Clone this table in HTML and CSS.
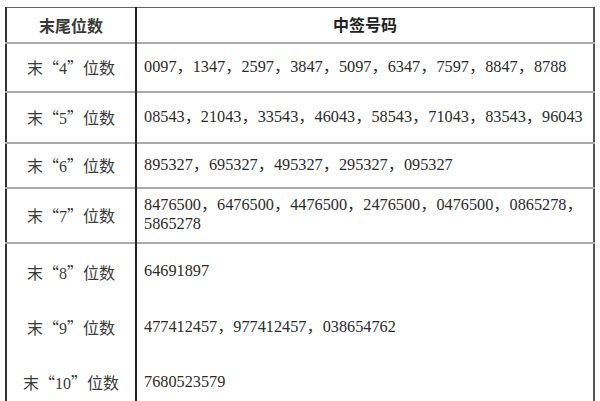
FILE: index.html
```html
<!DOCTYPE html>
<html lang="zh">
<head>
<meta charset="utf-8">
<link rel="stylesheet" href="styles.css">
</head>
<body>
<div class="sheet">
  <table class="lottery">
    <tr class="head">
      <th class="label">末尾位数</th>
      <th class="nums">中签号码</th>
    </tr>
    <tr class="r4 lined">
      <td class="label">末“<span class="d">4</span>”位数</td>
      <td class="nums">0097，1347，2597，3847，5097，6347，7597，8847，8788</td>
    </tr>
    <tr class="r5 lined">
      <td class="label">末“<span class="d">5</span>”位数</td>
      <td class="nums">08543，21043，33543，46043，58543，71043，83543，96043</td>
    </tr>
    <tr class="r6 lined">
      <td class="label">末“<span class="d">6</span>”位数</td>
      <td class="nums">895327，695327，495327，295327，095327</td>
    </tr>
    <tr class="r7 lined">
      <td class="label">末“<span class="d">7</span>”位数</td>
      <td class="nums">8476500，6476500，4476500，2476500，0476500，0865278，<br>5865278</td>
    </tr>
    <tr class="r8">
      <td class="label">末“<span class="d">8</span>”位数</td>
      <td class="nums">64691897</td>
    </tr>
    <tr class="r9">
      <td class="label">末“<span class="d">9</span>”位数</td>
      <td class="nums">477412457，977412457，038654762</td>
    </tr>
    <tr class="r10">
      <td class="label">末“<span class="d">10</span>”位数</td>
      <td class="nums">7680523579</td>
    </tr>
  </table>
</div>
</body>
</html>
```
FILE: styles.css
```css
html, body {
  margin: 0;
  padding: 0;
  background: #fff;
  overflow: hidden;
  height: 401px;
}
.sheet {
  padding: 7px 0 0 5px;
}
.lottery {
  border-collapse: collapse;
  table-layout: fixed;
  width: 590px;
  font-family: "Liberation Serif", "Noto Sans CJK SC", serif;
  font-size: 16px;
  color: #2b2b2b;
  border-top: 1px solid #666;
  border-left: 2px solid #333;
  border-right: 2px solid #555;
}
.lottery th, .lottery td {
  padding: 0;
  vertical-align: middle;
}
.lottery .label {
  width: 128px;
  text-align: center;
  border-right: 2px solid #222;
  font-family: "Noto Sans CJK SC", sans-serif;
  color: #3a3a3a;
}
.lottery .d {
  font-family: "Liberation Serif", serif;
}
.lottery .nums {
  text-align: left;
  padding-left: 7px;
  line-height: 19px;
  font-size: 16.25px;
}
.lottery th {
  font-weight: bold;
  font-family: "Noto Sans CJK SC", sans-serif;
  color: #222;
}
.lottery th.nums {
  text-align: center;
  padding-left: 0;
  font-size: 16px;
}
.head { height: 35px; border-bottom: 2px solid #aaa; }
.lined { border-bottom: 2px solid #aaa; }
.r4 { height: 49px; }
.r5 { height: 51px; }
.r6 { height: 45px; }
.r7 { height: 55px; }
.r8 { height: 57px; }
.r9 { height: 55px; }
.r10 { height: 55px; }
```
